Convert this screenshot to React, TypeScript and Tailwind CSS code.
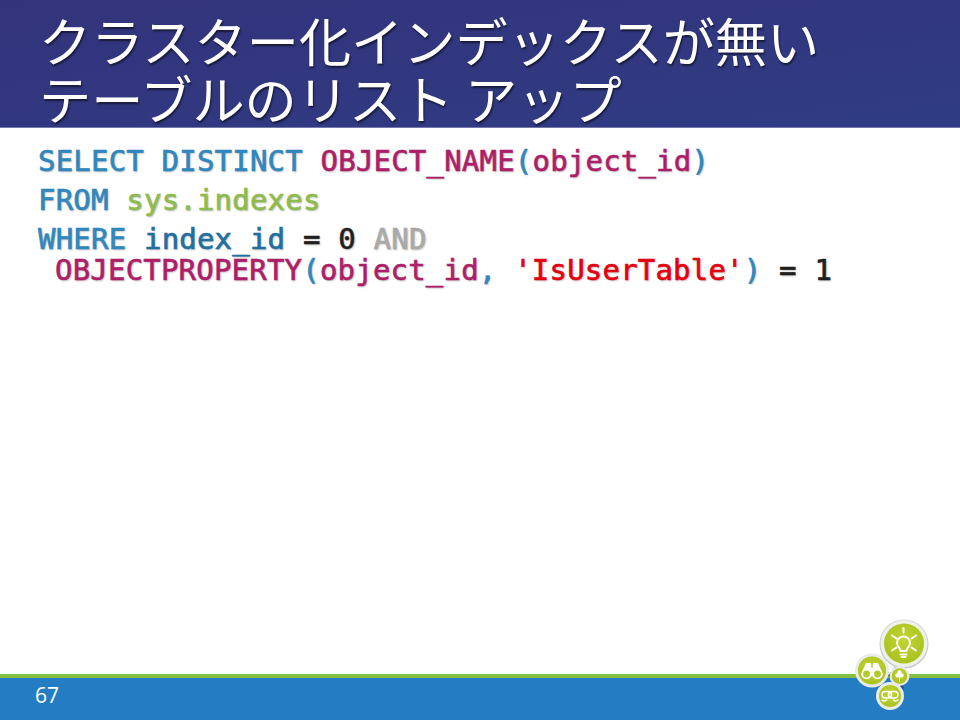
const titleFont = `"Noto Sans CJK JP", "Noto Sans", sans-serif`;

function Badges() {
  return (
    <svg className="absolute right-0 bottom-0" width="120" height="110" viewBox="840 610 120 110" fill="none">
      <defs>
        <radialGradient id="lime" cx="0.5" cy="0.4" r="0.65">
          <stop offset="0" stopColor="#c2d530" />
          <stop offset="1" stopColor="#a8c020" />
        </radialGradient>
      </defs>
      {/* dark gap behind the badges */}
      <path d="M888 676 L900 660 L904 690 Z" fill="#2b4f8f" />

      {/* light bulb */}
      <circle cx="904" cy="644" r="24.5" fill="#c9ccc6" />
      <circle cx="904" cy="643.5" r="23.5" fill="#eef0ea" />
      <circle cx="904" cy="643.5" r="20" fill="url(#lime)" />
      <g stroke="#fff" strokeWidth="2" strokeLinecap="round" strokeLinejoin="round">
        <path d="M900.5 651 C900.5 648 897 646.5 897 643 A6.5 6.5 0 0 1 910 643 C910 646.5 906.5 648 906.5 651 Z" />
        <path d="M900.5 654.5 H906.5 M901.5 657 H905.5" />
        <path d="M903.5 628 V632.5 M892 635.5 L896.5 638.5 M916 635.5 L911.5 638.5 M892 650.5 L896.5 647.5 M916 650.5 L911.5 647.5" />
      </g>

      {/* binoculars */}
      <circle cx="872" cy="670.5" r="17" fill="#e9ebe6" />
      <circle cx="872" cy="670.5" r="14" fill="url(#lime)" />
      <path d="M861 674 L866 663 H871 L871.4 668 H872.6 L873 663 H878 L883 674 A5.6 5.6 0 0 1 872.4 676 H871.6 A5.6 5.6 0 0 1 861 674 Z" fill="#fff" />
      <circle cx="866.5" cy="674" r="3.4" fill="#b5cb28" />
      <circle cx="877.5" cy="674" r="3.4" fill="#b5cb28" />

      {/* leaf */}
      <circle cx="899.5" cy="676" r="10" fill="#e9ebe6" />
      <circle cx="899.5" cy="676" r="7.8" fill="url(#lime)" />
      <path d="M899.5 670 C901.5 671 902 672.5 901.3 673.5 C903.5 673 904.5 675 903 677 C902 678 900.5 677.5 900 677 V681.5 H899 V677 C898.5 677.5 897 678 896 677 C894.5 675 895.5 673 897.7 673.5 C897 672.5 897.5 671 899.5 670 Z" fill="#fff" />

      {/* chain */}
      <circle cx="890" cy="696" r="14" fill="#e9ebe6" />
      <circle cx="890" cy="696" r="11" fill="url(#lime)" />
      <g stroke="#fff" strokeWidth="1.6" strokeLinecap="round">
        <rect x="882" y="691.5" width="9.5" height="6.5" rx="3.2" />
        <rect x="888.5" y="691.5" width="9.5" height="6.5" rx="3.2" />
        <path d="M882 700 Q884.5 702 886.5 700 M893.5 700 Q895.5 702 898 700" />
      </g>
    </svg>
  );
}

export default function App() {
  return (
    <div className="relative w-[960px] h-[720px] flex flex-col bg-white overflow-hidden">
      {/* Title band */}
      <div
        className="h-[128px] shrink-0 bg-gradient-to-br from-[#33337b] to-[#2f3c84] border-b border-[#7479ab] pl-[39px] pt-[10px] text-white text-[52.2px] leading-[58px] font-normal [text-shadow:1px_2px_2px_rgba(0,0,0,0.55)]"
        style={{ fontFamily: titleFont }}
      >
        <div className="whitespace-nowrap">クラスター化インデックスが無い</div>
        <div className="whitespace-nowrap">テーブルのリスト アップ</div>
      </div>

      {/* SQL body */}
      <div className="flex-1 pl-[38px] pt-[15px] font-['DejaVu_Sans_Mono',monospace] text-[29px] tracking-[0.2px] text-[#1f1f1f] [-webkit-text-stroke:0.6px] [text-shadow:1px_1px_2px_rgba(0,0,0,0.3)]">
        <div className="h-[39px] leading-[36px] whitespace-pre">
          <span className="text-[#2f87bd]">SELECT DISTINCT </span>
          <span className="text-[#ad1e68]">OBJECT_NAME</span>
          <span className="text-[#2f87bd]">(</span>
          <span className="text-[#ad1e68]">object_id</span>
          <span className="text-[#2f87bd]">)</span>
        </div>
        <div className="h-[39px] leading-[36px] whitespace-pre">
          <span className="text-[#2f87bd]">FROM </span>
          <span className="text-[#8ebb4b]">sys.indexes</span>
        </div>
        <div className="h-[31px] leading-[36px] whitespace-pre">
          <span className="text-[#2f87bd]">WHERE </span>
          <span className="text-[#1f6f9f]">index_id</span>
          <span> = 0 </span>
          <span className="text-[#a9a9a9]">AND</span>
        </div>
        <div className="pl-[17px] leading-[36px] whitespace-pre">
          <span className="text-[#ad1e68]">OBJECTPROPERTY</span>
          <span className="text-[#2f87bd]">(</span>
          <span className="text-[#ad1e68]">object_id</span>
          <span className="text-[#2f87bd]">, </span>
          <span className="text-[#e3000f]">'IsUserTable'</span>
          <span className="text-[#2f87bd]">)</span>
          <span> = 1</span>
        </div>
      </div>

      {/* Footer */}
      <div className="h-[46px] shrink-0 bg-[#247cc2] border-t-4 border-[#85bf42] pl-[35px] pt-[2px] text-[21px] leading-[30px] text-white font-['Open_Sans',sans-serif]">
        67
      </div>

      <Badges />
    </div>
  );
}
